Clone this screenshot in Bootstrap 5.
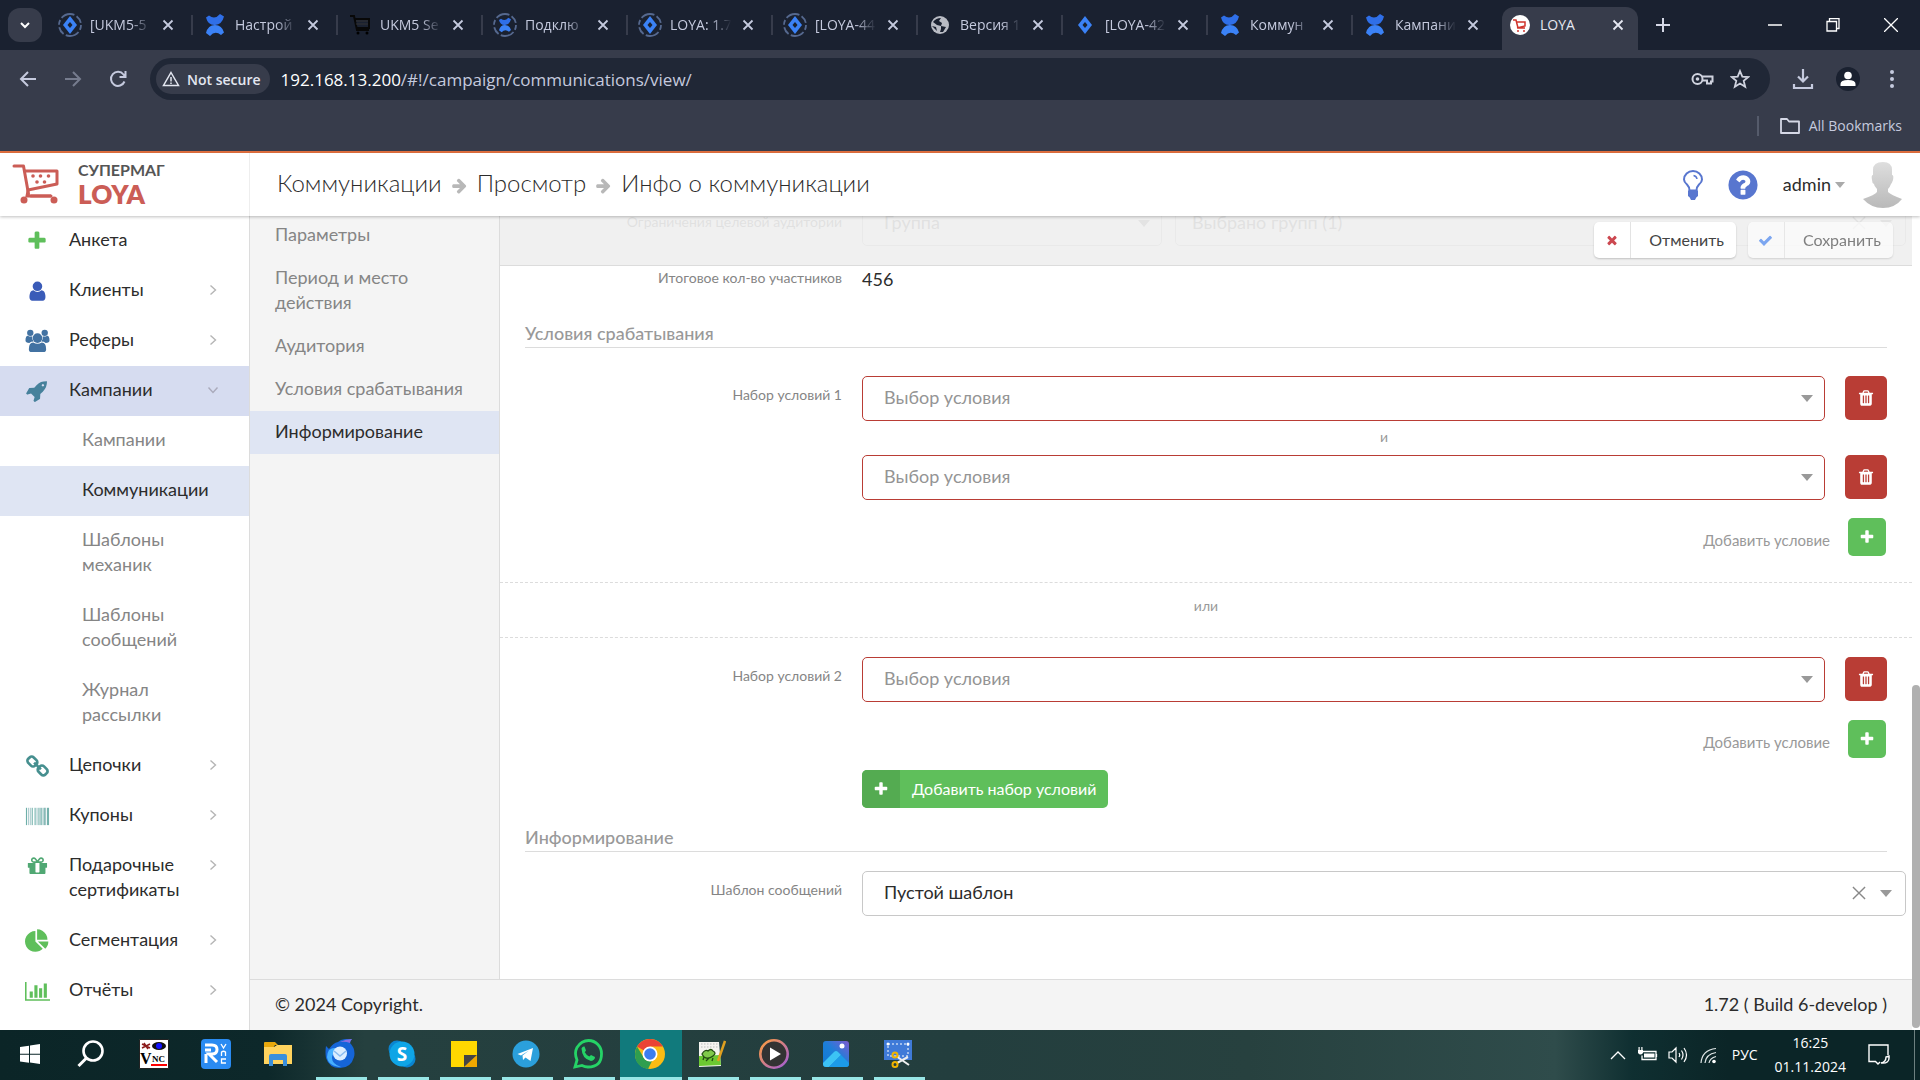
<!DOCTYPE html>
<html lang="ru">
<head>
<meta charset="utf-8">
<meta name="viewport" content="width=device-width, initial-scale=1">
<title>LOYA</title>
<link href="https://cdn.jsdelivr.net/npm/bootstrap@5.3.0/dist/css/bootstrap.min.css" rel="stylesheet">
<style>
:root{--ui:"Open Sans","Noto Sans",sans-serif;--app:Lato,"Open Sans",sans-serif;--ink:#2c2c2c;--dim:#858585;--rule:#dcdcdc}
body{height:100vh;font-family:var(--app);font-size:18px;line-height:25px;color:var(--ink);overflow:hidden;background:#fff}
svg{display:block;flex:none}
a{text-decoration:none;color:inherit}
.bare{border:0;background:none;padding:0;color:inherit;display:flex;align-items:center;justify-content:center}
/* browser */
.browser{font-family:var(--ui);background:#373c4b;color:#c5cade}
.tabstrip{background:#1a2130;height:50px;padding-left:8px}
.tabmenu{width:34px;height:34px;border-radius:12px;background:#373c4b;margin-right:6px;color:#fff}
.btab{width:145px;height:34px;padding-left:10px;position:relative;font-size:14px;line-height:20px}
.btab::after{content:"";position:absolute;right:0;top:7px;width:2px;height:20px;background:#373c4b}
.btab.last::after,.btab.on::after{display:none}
.btab .cap{width:68px;margin:0 4px 0 8px;white-space:nowrap;overflow:hidden;-webkit-mask:linear-gradient(90deg,#000 60%,transparent 90%);mask:linear-gradient(90deg,#000 60%,transparent 90%)}
.btab.on{align-self:flex-end;height:43px;width:136px;margin:0 0 0 4px;padding:0 0 7px 6px;background:#373c4b;border-radius:12px 12px 0 0;color:#e6e8f2}
.btab.on .cap{-webkit-mask:none;mask:none}
.winbtn{width:58px;height:40px;color:#fff}
.addr{height:58px;padding:0 18px 0 16px}
.navbtn{width:24px;margin-right:21px}
.omni{height:42px;border-radius:21px;background:#202736;margin-left:-1px;padding:0 20px 0 6px;min-width:0}
.chip{height:30px;border-radius:15px;background:#373c4b;padding:0 9px 0 6px;font-size:14px;font-weight:600;color:#e3e6f0;gap:7px}
.urltext{font-size:17px;padding-left:11px}
.hosty{color:#fff}
.tools{gap:22px;padding-left:22px}
.marks{height:43px;font-size:14px;padding:0 18px 8px 0}
.marks i{width:2px;height:20px;background:#555b6b;margin-right:20px}
.accent{height:2px;background:#e2703e}
/* header */
.apphead{height:63px;background:#fff;box-shadow:0 1px 3px rgba(0,0,0,.25);z-index:5}
.brand{width:250px;height:63px;padding:0 0 2px 12px;border-right:1px solid #eee}
.brand b{display:block}
.brand .l1{font-weight:700;font-size:16px;line-height:20px;color:#555}
.brand .l2{font-weight:800;font-size:26px;line-height:28px;color:#cb5d56}
.crumbs{font-weight:300;font-size:24px;line-height:30px;gap:9px;padding:0 0 4px 27px}
.crumbs svg{margin-top:6px}
/* side menu */
.side{width:250px;background:#fff;border-right:1px solid var(--rule)}
.side a{display:flex;padding:11px 0 14px 25px}
.side a svg.ic{width:25px;height:25px;margin-right:19px;margin-top:1px;margin-bottom:-1px}
.side a span{width:132px}
.side a .chev{margin:7px 0 0 6px}
.side .open{background:#d6dcf0}
.side .sub{padding-left:82px;color:var(--dim)}
.side .now,.steps .now{background:#dfe5f3;color:var(--ink)}
.steps{width:250px;background:#f4f4f4;border-right:1px solid var(--rule);color:var(--dim)}
.steps a{display:block;padding:8px 30px 10px 25px}
.steps a:first-child{padding-top:6px}
/* form */
.pane{background:#fff}
.formrow{display:flex;padding-right:25px}
.formrow.wide{padding-right:6px}
.lab{width:342px;margin-right:20px;padding-top:8px;text-align:right;font-size:14px;line-height:21px;color:var(--dim);flex:none}
.lab.cut{padding-top:10px}
.pick{height:45px;border:1px solid #c8c8c8;border-radius:5px;padding:0 40px 2px 21px;font-size:18px;line-height:25px;color:var(--ink);background-size:12px 7px;background-position:right 11px center;
--bs-form-select-bg-img:url("data:image/svg+xml,%3Csvg xmlns='http://www.w3.org/2000/svg' viewBox='0 0 12 7'%3E%3Cpath fill='%23999' d='M0 0h12L6 7z'/%3E%3C/svg%3E")}
.pick.bad{border-color:#b93d35;color:#949494}
.pick.last{background-position:right 13px center}
.delbtn{width:42px;height:44px;margin-left:20px;background:#b93d35;border-radius:5px;color:#fff;flex:none}
.addbtn{width:38px;height:38px;background:#5fbf5b;border-radius:5px;color:#fff;margin-left:18px}
.addrow{padding:18px 26px 0 0;font-size:15px;color:#999}
.addrow label{padding-top:10px}
.joiner{margin-left:362px;padding-right:6px;height:34px;line-height:32px;font-size:14px;color:#999;text-align:center}
.orbox{margin-top:26px;margin-bottom:19px;height:56px;border-top:1px dashed var(--rule);border-bottom:1px dashed var(--rule);padding-top:12px;font-size:14px;line-height:21px;color:#999;text-align:center}
.sect{margin:0 25px;padding-bottom:1px;border-bottom:1px solid var(--rule);font-size:18px;line-height:25px;color:#999}
.addset{margin:12px 0 17px 362px;height:38px;border-radius:5px;background:#5fbf5b;color:#fff;font-size:16px;overflow:hidden}
.addset span:first-child{width:38px;height:38px;background:#54ab51}
.addset span:last-child{padding:0 12px 2px}
.actbar{position:absolute;left:0;right:0;top:0;height:50px;background:rgba(238,238,238,.87);border-bottom:1px solid var(--rule);padding:6px 19px 0 0;gap:12px}
.act{height:36px;border-radius:5px;background:#fff;border:0;padding:0;font-size:16px;color:#444;box-shadow:0 1px 2px rgba(0,0,0,.2)}
.act span:first-child{width:37px;height:36px;border-right:1px solid #e3e3e3}
.act span:last-child{padding:0 12px 2px 18px}
.act:disabled{opacity:.65}
.clearx{position:absolute;right:37px;top:12px;width:20px;height:20px;color:#888}
.foot{height:51px;background:#f4f4f4;border-top:1px solid var(--rule);padding:0 25px 1px}
.track{width:8px;background:#fff;padding-top:469px}
.track div{height:343px;background:#b0b0b0;border-radius:4px}
/* taskbar */
.taskbar{height:50px;background:linear-gradient(90deg,#0b2527 0,#0d282a 14%,#25403f 19%,#233e3e 50%,#27413f 65%,#2f4c4b 81%,#0f2f31 85%,#0b2527 90%);font-family:var(--ui);color:#fff}
.tbtn{width:62px;height:50px;border-bottom:3px solid transparent;padding-right:2px;position:relative}
.tbtn.run::after{content:"";position:absolute;left:6px;right:5px;bottom:-3px;height:3px;background:#98e6e6}
.tbtn.act-now{background:#117a7c}
.tbtn.act-now::after{left:0;right:0}
.tray{font-size:14px;line-height:24px}
</style>
</head>
<body class="d-flex flex-column">
<svg width="0" height="0" style="position:absolute">
<symbol id="x" viewBox="0 0 12 12"><path d="M1.500 1.500l9 9m0-9l-9 9" stroke="currentColor" stroke-width="1.800" fill="none"/></symbol>
<symbol id="thinx" viewBox="0 0 12 12"><path d="M.8.800l10.400 10.400m0-10.400L.8 11.200" stroke="currentColor" stroke-width="1.200" fill="none"/></symbol>
<symbol id="jira" viewBox="0 0 24 24"><path d="M12 3l7 9-7 9-7-9z" fill="#3b82f6"/><path d="M12 9l2.500 3-2.500 3-2.500-3z" fill="#1a2130"/></symbol>
<symbol id="ring" viewBox="0 0 24 24"><circle cx="12" cy="12" r="11" fill="none" stroke="#56698f" stroke-width="1.800" stroke-dasharray="5 2.500 14 2.500 8 2.500"/></symbol>
<symbol id="conf" viewBox="0 0 24 24"><path d="M3 4.500l3-2q6 4.500 11-1.500l4 2.500q-2 8-9 8.500T3 4.500z" fill="#2f6fe8"/><path d="M21 19.500l-3 2.500q-6-5-11 1l-4-3q2-8 9-8t9 7.500z" fill="#3b82f6"/></symbol>
<symbol id="plus" viewBox="0 0 1792 1792"><path fill="currentColor" d="M1600 736v192q0 40-28 68t-68 28h-416v416q0 40-28 68t-68 28h-192q-40 0-68-28t-28-68v-416h-416q-40 0-68-28t-28-68v-192q0-40 28-68t68-28h416v-416q0-40 28-68t68-28h192q40 0 68 28t28 68v416h416q40 0 68 28t28 68z"/></symbol>
<symbol id="trash" viewBox="0 0 1792 1792"><path fill="currentColor" d="M704 1376v-704q0-14-9-23t-23-9h-64q-14 0-23 9t-9 23v704q0 14 9 23t23 9h64q14 0 23-9t9-23zm256 0v-704q0-14-9-23t-23-9h-64q-14 0-23 9t-9 23v704q0 14 9 23t23 9h64q14 0 23-9t9-23zm256 0v-704q0-14-9-23t-23-9h-64q-14 0-23 9t-9 23v704q0 14 9 23t23 9h64q14 0 23-9t9-23zm-544-992h448l-48-117q-7-9-17-11h-317q-10 2-17 11zm928 32v64q0 14-9 23t-23 9h-96v948q0 83-47 143.500t-113 60.500h-832q-66 0-113-58.500t-47-141.500v-952h-96q-14 0-23-9t-9-23v-64q0-14 9-23t23-9h309l70-167q15-37 54-63t79-26h320q40 0 79 26t54 63l70 167h309q14 0 23 9t9 23z"/></symbol>
<symbol id="arr" viewBox="0 0 1792 1792"><path fill="#b8b8b8" d="M1600 960q0 54-37 91l-651 651q-39 37-91 37-51 0-90-37l-75-75q-38-38-38-91t38-91l293-293h-704q-52 0-84.500-37.500t-32.500-90.500v-128q0-53 32.500-90.500t84.500-37.500h704l-293-294q-38-36-38-90t38-90l75-75q38-38 90-38 53 0 91 38l651 651q37 35 37 90z"/></symbol>
<symbol id="chev" viewBox="0 0 12 12"><path d="M3.500 1.500L8.500 6l-5 4.500" fill="none" stroke="#b5b5b5" stroke-width="1.400"/></symbol>
<symbol id="cart" viewBox="0 0 48 42"><g fill="none" stroke="#cb5d56" stroke-width="3" stroke-linejoin="round" stroke-linecap="round"><path d="M2 3h9.500l5 28"/><path d="M13 8h32v13L16 27"/><path d="M19 33h20"/></g><path d="M16 28l-1 5h24" fill="none" stroke="#cb5d56" stroke-width="3"/><g fill="#cb5d56"><circle cx="12" cy="37" r="3.500"/><circle cx="42" cy="37" r="3.500"/><circle cx="21" cy="13" r="1.800"/><circle cx="28.500" cy="13" r="1.800"/><circle cx="36.500" cy="13" r="1.800"/><circle cx="25" cy="19" r="1.800"/><circle cx="32.500" cy="19" r="1.800"/></g></symbol>
</svg>

<section class="browser">
  <div class="tabstrip d-flex align-items-center">
    <button class="bare tabmenu" aria-label="Tabs"><svg width="12" height="12" viewBox="0 0 12 12"><path d="M2 4l4 4 4-4" fill="none" stroke="#fff" stroke-width="2"/></svg></button>
    <div class="btab d-flex align-items-center"><svg width="24" height="24"><use href="#ring"/><use href="#jira"/></svg><span class="cap">[UKM5-5</span><button class="bare" aria-label="Close"><svg width="12" height="12"><use href="#x"/></svg></button></div>
    <div class="btab d-flex align-items-center"><svg width="24" height="24"><use href="#conf"/></svg><span class="cap">Настрой</span><button class="bare" aria-label="Close"><svg width="12" height="12"><use href="#x"/></svg></button></div>
    <div class="btab d-flex align-items-center"><svg width="24" height="24" viewBox="0 0 24 24"><path d="M2 3h4l3 14h12M6 6h15v9H9" fill="none" stroke="#080808" stroke-width="2"/><path d="M8 8h12M8 11h12" stroke="#333" stroke-width="1"/><circle cx="10" cy="20" r="1.500"/><circle cx="19" cy="20" r="1.500"/></svg><span class="cap">UKM5 Se</span><button class="bare" aria-label="Close"><svg width="12" height="12"><use href="#x"/></svg></button></div>
    <div class="btab d-flex align-items-center"><svg width="24" height="24"><use href="#ring"/><use href="#conf" x="4" y="4" width="16" height="16"/></svg><span class="cap">Подклю</span><button class="bare" aria-label="Close"><svg width="12" height="12"><use href="#x"/></svg></button></div>
    <div class="btab d-flex align-items-center"><svg width="24" height="24"><use href="#ring"/><use href="#jira"/></svg><span class="cap">LOYA: 1.7</span><button class="bare" aria-label="Close"><svg width="12" height="12"><use href="#x"/></svg></button></div>
    <div class="btab d-flex align-items-center"><svg width="24" height="24"><use href="#ring"/><use href="#jira"/></svg><span class="cap">[LOYA-44</span><button class="bare" aria-label="Close"><svg width="12" height="12"><use href="#x"/></svg></button></div>
    <div class="btab d-flex align-items-center"><svg width="24" height="24" viewBox="0 0 24 24"><circle cx="12" cy="12" r="9" fill="#b9bcc4"/><path d="M5 9q3-4 8-4l-2 3 3 2-1 3-4-1zM13 13l5 1-3 5-3 0 1-3zM4 13l4 1 1 4z" fill="#1a2130"/></svg><span class="cap">Версия 1</span><button class="bare" aria-label="Close"><svg width="12" height="12"><use href="#x"/></svg></button></div>
    <div class="btab d-flex align-items-center"><svg width="24" height="24"><use href="#jira"/></svg><span class="cap">[LOYA-42</span><button class="bare" aria-label="Close"><svg width="12" height="12"><use href="#x"/></svg></button></div>
    <div class="btab d-flex align-items-center"><svg width="24" height="24"><use href="#conf"/></svg><span class="cap">Коммун</span><button class="bare" aria-label="Close"><svg width="12" height="12"><use href="#x"/></svg></button></div>
    <div class="btab last d-flex align-items-center"><svg width="24" height="24"><use href="#conf"/></svg><span class="cap">Кампани</span><button class="bare" aria-label="Close"><svg width="12" height="12"><use href="#x"/></svg></button></div>
    <div class="btab on d-flex align-items-center"><svg width="24" height="24" viewBox="0 0 24 24"><circle cx="12" cy="12" r="10" fill="#fff"/><path d="M5 7h3l2 8h7M8 9h9v4l-8 2" fill="none" stroke="#d0342c" stroke-width="1.500"/><circle cx="10" cy="18" r="1" fill="#d0342c"/><circle cx="16" cy="18" r="1" fill="#d0342c"/></svg><span class="cap">LOYA</span><button class="bare" aria-label="Close"><svg width="12" height="12"><use href="#x"/></svg></button></div>
    <button class="bare ms-3" aria-label="New tab"><svg width="18" height="18" viewBox="0 0 18 18"><path d="M9 2v14M2 9h14" stroke="#d5d8e6" stroke-width="2"/></svg></button>
    <div class="ms-auto d-flex">
      <button class="bare winbtn" aria-label="Minimize"><svg width="14" height="14" viewBox="0 0 14 14"><path d="M0 7h14" stroke="#fff" stroke-width="1.500"/></svg></button>
      <button class="bare winbtn" aria-label="Restore"><svg width="14" height="14" viewBox="0 0 14 14"><path d="M1 3.500h9.500V13H1zM3.500 3.500v-3H13V10.500h-2.500" fill="none" stroke="#fff" stroke-width="1.300"/></svg></button>
      <button class="bare winbtn" aria-label="Close window"><svg width="14" height="14" viewBox="0 0 14 14"><path d="M0 0l14 14M14 0L0 14" stroke="#fff" stroke-width="1.300"/></svg></button>
    </div>
  </div>
  <div class="addr d-flex align-items-center">
    <button class="bare navbtn" aria-label="Back"><svg width="20" height="20" viewBox="0 0 20 20"><path d="M18 10H3M10 3l-7 7 7 7" fill="none" stroke="#c5cade" stroke-width="2"/></svg></button>
    <button class="bare navbtn" aria-label="Forward"><svg width="20" height="20" viewBox="0 0 20 20"><path d="M2 10h15M10 3l7 7-7 7" fill="none" stroke="#767c8e" stroke-width="2"/></svg></button>
    <button class="bare navbtn" aria-label="Reload"><svg width="20" height="20" viewBox="0 0 20 20"><path d="M16.500 12.500A7 7 0 1 1 15.500 5.500L17 7M17.500 2v6h-6" fill="none" stroke="#c5cade" stroke-width="2"/></svg></button>
    <div class="omni d-flex align-items-center flex-grow-1">
      <button class="bare chip"><svg width="18" height="18" viewBox="0 0 18 18"><path d="M9 2.500L16.500 15.500h-15zM9 7v4.500M9 12.500v1.500" fill="none" stroke="#e3e6f0" stroke-width="1.500"/></svg>Not secure</button>
      <a href="#" class="urltext flex-grow-1"><span class="hosty">192.168.13.200</span>/#!/campaign/communications/view/</a>
      <button class="bare me-3" aria-label="Passwords"><svg width="24" height="24" viewBox="0 0 24 24"><circle cx="7.500" cy="12" r="5" fill="none" stroke="#d0d3df" stroke-width="2"/><circle cx="7.500" cy="12" r="1.800" fill="#d0d3df"/><path d="M12 9.500h10.500v5h-1.500v2h-4v-3h-5" fill="none" stroke="#d0d3df" stroke-width="2"/></svg></button>
      <button class="bare" aria-label="Bookmark"><svg width="20" height="20" viewBox="0 0 20 20"><path d="M10 2l2.300 5.600 6 .4-4.600 3.900 1.500 5.900L10 14.600l-5.200 3.200 1.500-5.900L1.700 8l6-.4z" fill="none" stroke="#d0d3df" stroke-width="1.800"/></svg></button>
    </div>
    <div class="tools d-flex align-items-center">
      <button class="bare" aria-label="Downloads"><svg width="22" height="22" viewBox="0 0 22 22"><path d="M11 1v12M6 8.500l5 5 5-5M2 16v4h18v-4" fill="none" stroke="#c5cade" stroke-width="2.200"/></svg></button>
      <button class="bare" aria-label="Profile"><svg width="24" height="24" viewBox="0 0 24 24"><circle cx="12" cy="12" r="12" fill="#1a2130"/><circle cx="12" cy="8.500" r="3.800" fill="#fff"/><path d="M4.500 19v-2q0-4 7.500-4t7.500 4v2z" fill="#fff"/></svg></button>
      <button class="bare" aria-label="Menu"><svg width="20" height="20" viewBox="0 0 20 20" fill="#c5cade"><circle cx="10" cy="3" r="2"/><circle cx="10" cy="10" r="2"/><circle cx="10" cy="17" r="2"/></svg></button>
    </div>
  </div>
  <div class="marks d-flex align-items-center justify-content-end"><i></i><svg class="me-2" width="22" height="18" viewBox="0 0 22 18"><path d="M2 2h6l2 2.500h10V16H2z" fill="none" stroke="#d5d8e6" stroke-width="1.800" stroke-linejoin="round"/></svg><a href="#">All Bookmarks</a></div>
  <div class="accent"></div>
</section>

<header class="apphead d-flex align-items-center">
  <a href="#" class="brand d-flex align-items-center"><svg width="48" height="42"><use href="#cart"/></svg><span style="padding-left:18px"><b class="l1">СУПЕРМАГ</b><b class="l2">LOYA</b></span></a>
  <nav class="crumbs d-flex align-items-center flex-grow-1"><a href="#">Коммуникации</a><svg width="17" height="17"><use href="#arr"/></svg><a href="#">Просмотр</a><svg width="17" height="17"><use href="#arr"/></svg><a href="#">Инфо о коммуникации</a></nav>
  <div class="d-flex align-items-center" style="padding-right:16px">
    <button class="bare" aria-label="Подсказка" style="margin-right:22px"><svg width="22" height="30" viewBox="0 0 22 30"><path d="M7.500 20.500Q7.500 17 5 14.500Q2 12 2 9.500A9 8.500 0 0 1 20 9.500Q20 12 17 14.500Q14.500 17 14.500 20.500z" fill="none" stroke="#5876cf" stroke-width="2"/><path d="M11.500 5.500q3 .5 3.500 3.500" fill="none" stroke="#5876cf" stroke-width="1.500"/><path d="M6 20.500h10v5.500q-2 1-3 4H9Q8 27 6 26z" fill="#5876cf"/></svg></button>
    <a href="#" aria-label="Помощь" style="margin-right:23px"><svg width="34" height="34" viewBox="0 0 1792 1792"><path fill="#5876cf" d="M1024 1376v-192q0-14-9-23t-23-9h-192q-14 0-23 9t-9 23v192q0 14 9 23t23 9h192q14 0 23-9t9-23zm256-672q0-88-55.500-163t-138.500-116-170-41q-243 0-371 213-15 24 8 42l132 100q7 6 19 6 16 0 25-12 53-68 86-92 34-24 86-24 48 0 85.500 26t37.500 59q0 38-20 61t-68 45q-63 28-115.500 86.500t-52.500 125.500v36q0 14 9 23t23 9h192q14 0 23-9t9-23q0-19 21.500-49.500t54.500-49.500q32-18 49-28.500t46-35 44.500-48 28-60.500 12.500-81zm384 192q0 209-103 385.500t-279.500 279.500-385.500 103-385.500-103-279.500-279.500-103-385.500 103-385.500 279.500-279.500 385.500-103 385.500 103 279.500 279.500 103 385.500z"/></svg></a>
    <button class="bare">admin<svg class="ms-1" width="10" height="6" viewBox="0 0 10 6"><path d="M0 0h10L5 6z" fill="#aaa"/></svg></button>
    <svg width="42" height="48" viewBox="0 0 42 48" style="margin-left:17px"><defs><linearGradient id="av" x1="0" y1="0" x2="0" y2="1"><stop stop-color="#dedede"/><stop offset="1" stop-color="#b9b9b9"/></linearGradient></defs><path d="M21 1q9 0 9 8v5q2 0 1 5-1 3-2 4-1 3-3 5v3q3 3 14 7-7 9-19 9T1 38q12-4 14-7v-3q-3-3-3-5-2-1-2-4-1-5 1-5V9q0-8 10-8z" fill="url(#av)"/></svg>
  </div>
</header>

<main class="d-flex flex-grow-1" style="min-height:0">
  <nav class="side flex-shrink-0 overflow-hidden">
    <a href="#"><svg class="ic" style="color:#5fbf5b"><use href="#plus" x="1" y="2" width="22" height="22"/></svg><span>Анкета</span></a>
    <a href="#"><svg class="ic" viewBox="-100 -150 2000 2000"><path fill="#3a5bb8" d="M1536 1399q0 109-62.500 187t-150.500 78h-854q-88 0-150.500-78t-62.500-187q0-85 8.500-160.500t31.500-152 58.500-131 94-89 134.500-34.500q131 128 313 128t313-128q76 0 134.500 34.500t94 89 58.500 131 31.500 152 8.500 160.500zm-256-887q0 159-112.500 271.500t-271.500 112.500-271.500-112.500-112.500-271.500 112.500-271.500 271.500-112.500 271.500 112.500 112.500 271.500z"/></svg><span>Клиенты</span><svg class="chev" width="12" height="12"><use href="#chev"/></svg></a>
    <a href="#"><svg class="ic" viewBox="0 0 26 26" fill="#4272a2"><circle cx="13" cy="10.500" r="5"/><path d="M4 22q0-7 4.500-7 4.500 3 9 0Q22 15 22 22q0 3-3 3H7q-3 0-3-3z"/><circle cx="5.500" cy="5" r="3.300"/><circle cx="20.500" cy="5" r="3.300"/><path d="M.5 13q0-5 2.500-5 2.500 1.500 4.500.5-.5 3.500 1.500 5.500-3 0-4.500 1.500Q.5 15.500.5 13zM25.500 13q0-5-2.500-5-2.500 1.500-4.500.5.500 3.500-1.500 5.500 3 0 4.500 1.500 4 0 4-2.500z"/></svg><span>Реферы</span><svg class="chev" width="12" height="12"><use href="#chev"/></svg></a>
    <a href="#" class="open"><svg class="ic" viewBox="-60 -120 1960 1960"><path fill="#46819b" d="M1440 448q0-40-28-68t-68-28-68 28-28 68 28 68 68 28 68-28 28-68zm224-288q0 249-75.500 430.500t-253.500 360.500q-81 80-195 176l-20 379q-2 16-16 26l-384 224q-7 4-16 4-12 0-23-9l-64-64q-13-14-8-32l85-276-281-281-276 85q-3 1-9 1-14 0-23-9l-64-64q-17-19-5-39l224-384q10-14 26-16l379-20q96-114 176-195 188-187 358-258t431-71q14 0 24 9.500t10 22.500z"/></svg><span>Кампании</span><svg class="chev" width="12" height="12" viewBox="0 0 12 12"><path d="M1.500 3.500L6 8.500l4.500-5" fill="none" stroke="#aab" stroke-width="1.400"/></svg></a>
    <a href="#" class="sub">Кампании</a>
    <a href="#" class="sub now">Коммуникации</a>
    <a href="#" class="sub">Шаблоны<br>механик</a>
    <a href="#" class="sub">Шаблоны<br>сообщений</a>
    <a href="#" class="sub">Журнал<br>рассылки</a>
    <a href="#"><svg class="ic" viewBox="0 0 26 26"><g fill="none" stroke="#468f8f" stroke-width="2.800"><rect x="-5" y="-3.500" width="10" height="8" rx="3" transform="translate(8 8.500) rotate(45)"/><rect x="-5" y="-4.500" width="10" height="8" rx="3" transform="translate(18 18.500) rotate(45)"/><path d="M9.500 10l7 7"/></g></svg><span>Цепочки</span><svg class="chev" width="12" height="12"><use href="#chev"/></svg></a>
    <a href="#"><svg class="ic" viewBox="0 0 26 26"><path d="M1.500 5v18M7.500 5v18M10.500 5v18M14.500 5v18M17.500 5v18M23.500 5v18" stroke="#5fa7a0" stroke-width="1"/><path d="M3.500 5v18M5.500 5v18M12.500 5v18M16 5v18M19.500 5v18M21.500 5v18" stroke="#9fc4c6"/><path d="M24.500 5v18M20.500 5v18" stroke="#6aa9a4"/></svg><span>Купоны</span><svg class="chev" width="12" height="12"><use href="#chev"/></svg></a>
    <a href="#"><svg class="ic" viewBox="-100 -150 2000 2000"><path fill="#50a873" d="M1056 1356v-716h-320v716q0 25 18 38.500t46 13.500h192q28 0 46-13.500t18-38.500zm-456-844h195l-126-161q-26-31-69-31-40 0-68 28t-28 68 28 68 68 28zm688-96q0-40-28-68t-68-28q-43 0-69 31l-125 161h194q40 0 68-28t28-68zm376 256v320q0 14-9 23t-23 9h-96v416q0 40-28 68t-68 28h-1088q-40 0-68-28t-28-68v-416h-96q-14 0-23-9t-9-23v-320q0-14 9-23t23-9h440q-93 0-158.500-65.500t-65.500-158.500 65.500-158.500 158.500-65.500q107 0 168 77l128 165 128-165q61-77 168-77 93 0 158.500 65.500t65.500 158.500-65.500 158.500-158.500 65.500h440q14 0 23 9t9 23z"/></svg><span>Подарочные<br>сертификаты</span><svg class="chev" width="12" height="12"><use href="#chev"/></svg></a>
    <a href="#"><svg class="ic" viewBox="0 -100 1850 1850"><path fill="#5fbf5b" d="M768 890l546 546q-106 108-247.500 168t-298.500 60q-209 0-385.500-103t-279.500-279.500-103-385.500 103-385.500 279.500-279.500 385.500-103v762zm187 6h773q0 157-60 298.500t-168 247.500zm709-128h-768v-768q209 0 385.500 103t279.500 279.500 103 385.500z"/></svg><span>Сегментация</span><svg class="chev" width="12" height="12"><use href="#chev"/></svg></a>
    <a href="#"><svg class="ic" viewBox="0 -200 2048 2048"><path fill="#5fbf5b" d="M640 896v512h-256v-512h256zm384-512v1024h-256v-1024h256zm1024 1152v128h-2048v-1536h128v1408h1920zm-640-896v768h-256v-768h256zm384-384v1152h-256v-1152h256z"/></svg><span>Отчёты</span><svg class="chev" width="12" height="12"><use href="#chev"/></svg></a>
  </nav>
  <div class="d-flex flex-column flex-grow-1">
    <div class="d-flex flex-grow-1" style="min-height:0">
      <nav class="steps flex-shrink-0"><a href="#">Параметры</a><a href="#">Период и место<br>действия</a><a href="#">Аудитория</a><a href="#">Условия срабатывания</a><a href="#" class="now">Информирование</a></nav>
      <form class="pane flex-grow-1 position-relative overflow-hidden">
        <div class="formrow wide" style="margin-top:-15px">
          <label class="lab cut" for="lim">Ограничения целевой аудитории</label>
          <select id="lim" class="form-select pick flex-shrink-0" style="width:300px;color:#888"><option>Группа</option></select>
          <div class="position-relative flex-grow-1" style="margin-left:13px"><select class="form-select pick last" aria-label="Группы" style="color:#888;padding-left:16px"><option>Выбрано групп (1)</option></select><button type="button" class="bare clearx" aria-label="Очистить"><svg width="14" height="14"><use href="#thinx"/></svg></button></div>
        </div>
        <div class="formrow" style="margin-top:21px"><span class="lab" style="padding-top:0">Итоговое кол-во участников</span><span>456</span></div>
        <h2 class="sect" style="margin-top:29px;margin-bottom:28px">Условия срабатывания</h2>
        <div class="formrow"><label class="lab" for="c1">Набор условий 1</label><select id="c1" class="form-select pick bad"><option>Выбор условия</option></select><button type="button" class="bare delbtn" aria-label="Удалить"><svg width="18" height="18"><use href="#trash"/></svg></button></div>
        <div class="joiner">и</div>
        <div class="formrow"><span class="lab"></span><select aria-label="Условие" class="form-select pick bad"><option>Выбор условия</option></select><button type="button" class="bare delbtn" aria-label="Удалить"><svg width="18" height="18"><use href="#trash"/></svg></button></div>
        <div class="addrow d-flex justify-content-end"><label for="a1">Добавить условие</label><button type="button" id="a1" class="bare addbtn"><svg width="16" height="16"><use href="#plus"/></svg></button></div>
        <div class="orbox">или</div>
        <div class="formrow"><label class="lab" for="c3">Набор условий 2</label><select id="c3" class="form-select pick bad"><option>Выбор условия</option></select><button type="button" class="bare delbtn" aria-label="Удалить"><svg width="18" height="18"><use href="#trash"/></svg></button></div>
        <div class="addrow d-flex justify-content-end"><label for="a2">Добавить условие</label><button type="button" id="a2" class="bare addbtn"><svg width="16" height="16"><use href="#plus"/></svg></button></div>
        <button type="button" class="bare addset"><span class="d-flex align-items-center justify-content-center"><svg width="16" height="16"><use href="#plus"/></svg></span><span>Добавить набор условий</span></button>
        <h2 class="sect" style="margin-bottom:19px">Информирование</h2>
        <div class="formrow wide"><label class="lab" for="tpl">Шаблон сообщений</label><div class="position-relative flex-grow-1"><select id="tpl" class="form-select pick last"><option>Пустой шаблон</option></select><button type="button" class="bare clearx" aria-label="Очистить"><svg width="14" height="14"><use href="#thinx"/></svg></button></div></div>
        <div class="actbar d-flex justify-content-end">
          <button type="button" class="act d-flex align-items-center"><span class="d-flex align-items-center justify-content-center"><svg width="14" height="14" viewBox="0 0 1792 1792"><path fill="#cc4850" d="M1490 1322q0 40-28 68l-136 136q-28 28-68 28t-68-28l-294-294-294 294q-28 28-68 28t-68-28l-136-136q-28-28-28-68t28-68l294-294-294-294q-28-28-28-68t28-68l136-136q28-28 68-28t68 28l294 294 294-294q28-28 68-28t68 28l136 136q28 28 28 68t-28 68l-294 294 294 294q28 28 28 68z"/></svg></span><span>Отменить</span></button>
          <button type="button" class="act d-flex align-items-center" disabled><span class="d-flex align-items-center justify-content-center"><svg width="15" height="15" viewBox="0 0 1792 1792"><path fill="#3f7ff0" d="M1671 566q0 40-28 68l-724 724-136 136q-28 28-68 28t-68-28l-136-136-362-362q-28-28-28-68t28-68l136-136q28-28 68-28t68 28l294 295 656-657q28-28 68-28t68 28l136 136q28 28 28 68z"/></svg></span><span>Сохранить</span></button>
        </div>
      </form>
    </div>
    <footer class="foot d-flex align-items-center justify-content-between"><span>© 2024 Copyright.</span><span>1.72 ( Build 6-develop )</span></footer>
  </div>
  <div class="track flex-shrink-0"><div></div></div>
</main>

<footer class="taskbar d-flex align-items-center flex-shrink-0">
  <button class="bare tbtn" aria-label="Пуск"><svg width="20" height="20" viewBox="0 0 20 20"><path fill="#fff" d="M0 3l9-1.300v8H0zM10 1.500L20 0v9.700H10zM0 10.700h9v8L0 17.500zM10 10.700h10V20l-10-1.500z"/></svg></button>
  <button class="bare tbtn" aria-label="Поиск"><svg width="30" height="30" viewBox="2 0 30 30"><circle cx="18" cy="12" r="9.500" fill="none" stroke="#fff" stroke-width="2.600"/><path d="M11.500 19l-8 8" stroke="#fff" stroke-width="3"/></svg></button>
  <button class="bare tbtn" aria-label="VNC"><svg width="30" height="30" viewBox="0 0 30 30"><path fill="#fff" stroke="#222" d="M.5.500h29v29H.5z"/><ellipse cx="20" cy="7" rx="7" ry="4" fill="#111"/><circle cx="20" cy="7" r="3" fill="#11f"/><path d="M3 5l8 4M3 9l8-4M5 4l4 6" stroke="#8b1a1a" stroke-width="1.500"/><text x="1" y="25" font-family="Liberation Serif" font-weight="700" font-size="16">V</text><text x="13" y="23" font-family="Liberation Serif" font-weight="700" font-size="9">NC</text><path fill="#f00" d="M12 25h16v2H12z"/></svg></button>
  <button class="bare tbtn" aria-label="RealVNC"><svg width="30" height="30" viewBox="0 0 30 30"><rect width="30" height="30" rx="4" fill="#2a8bf2"/><path d="M4 6h7q5 0 5 4.500T11 15H8l8 8M4 11h6M5 15v9" fill="none" stroke="#fff" stroke-width="3"/><path d="M20 5l2.500 4L25 5M20.500 17v-4q2-1.500 4 0v4M25 20h-4.500v4H25" fill="none" stroke="#fff" stroke-width="1.300"/></svg></button>
  <button class="bare tbtn" aria-label="Проводник"><svg width="28" height="24" viewBox="0 0 28 24"><path fill="#e8a80c" d="M0 1q0-1 1-1h10l3 3h-3L9 6H0z"/><path fill="#ffd35e" d="M0 5h10l3-2h15v19H0z"/><path fill="#3a8fdc" d="M5 24V14q0-2 2-2h14q2 0 2 2v10h-4v-6H9v6z"/></svg></button>
  <button class="bare tbtn run" aria-label="Thunderbird"><svg width="30" height="30" viewBox="0 0 30 30"><path fill="#1565d8" d="M1 7l3 3Q8 4 13 3q4-4 14-3-2 2-2 4 6 6 4 14-3 11-14 11T1 19Q0 13 1 7z"/><path fill="#46b0ff" d="M4 11q6-4 9 0-6 3-6 8 0 6 9 9Q3 27 2 18q0-4 2-7z"/><path fill="#8b6fe0" d="M15 3q6-3 12-3-2 2-2 4-5-2-10-1z"/><circle cx="15" cy="14.500" r="7" fill="#dceeff"/><path d="M9 12l6 5 6-5" fill="none" stroke="#8bbcf0" stroke-width="1.500"/></svg></button>
  <button class="bare tbtn run" aria-label="Skype"><svg width="28" height="28" viewBox="0 0 28 28"><circle cx="9" cy="9" r="8.500" fill="#0a84d0"/><circle cx="19" cy="19" r="8.500" fill="#0a84d0"/><circle cx="14" cy="14" r="12.500" fill="#0fa5e6"/><text x="14" y="21" text-anchor="middle" font-family="Open Sans" font-weight="700" font-size="19" fill="#fff">S</text></svg></button>
  <button class="bare tbtn run" aria-label="Заметки"><svg width="26" height="26" viewBox="0 0 26 26"><path fill="#ffd800" d="M0 0h26v26H0z"/><path fill="#f0a800" d="M13 26l13-12v12z"/><path fill="#444" d="M13 14h13L13 26z"/></svg></button>
  <button class="bare tbtn run" aria-label="Telegram"><svg width="28" height="28" viewBox="0 0 28 28"><circle cx="14" cy="14" r="13.500" fill="#2ba0dc"/><path fill="#fff" d="M5.500 14L21 8l-2.500 13-5-3.500-2.500 2.500-.5-4.500L17 10.500 9 15.500z"/></svg></button>
  <button class="bare tbtn run" aria-label="WhatsApp"><svg width="30" height="30" viewBox="0 0 30 30"><path d="M2 28l2-7Q1 14 4 8.500 8.500 1.500 15.500 1.500A13 13 0 0 1 28.500 15q0 13-13.500 13-3 0-6-1.500z" fill="none" stroke="#25d366" stroke-width="2.800"/><path fill="#25d366" d="M8.500 9.500q1-2.500 3-2l1.500 4-1.200 1.800q1.500 3 4.500 4.200l1.700-1.500 4 2q0 3-4 4Q9 20 8.500 9.500z"/></svg></button>
  <button class="bare tbtn run act-now" aria-label="Chrome"><svg width="30" height="30" viewBox="0 0 30 30"><circle cx="15" cy="15" r="15" fill="#fbbc14"/><path fill="#ea4335" d="M15 15L2 7.500Q6.500 0 15 0t13 7.500H15z"/><path fill="#2f9e4f" d="M2 7.500L9 19q3 4 8 3l-4 8Q0 27.500 0 15q0-4 2-7.500z"/><circle cx="15" cy="15" r="7.500" fill="#fff"/><circle cx="15" cy="15" r="5.800" fill="#3b7df0"/></svg></button>
  <button class="bare tbtn run" aria-label="Notepad++"><svg width="28" height="28" viewBox="0 0 28 28"><path fill="#f4f4f0" d="M1 2l20 0 2 24-22 1z"/><path fill="#6cc832" d="M1 16l21-1 1 10-22 1z"/><path d="M3 4h17M3 7h17" stroke="#bbb" stroke-dasharray="1.500 1.500"/><path d="M4 14q3-5 6-3 3-3 5 0 4 2 0 5-5 4-9 1zM8 21l3-3M14 21l1-3M6 17l-1 3" fill="#7fc94a" stroke="#234d12" stroke-width="1.300"/><path d="M27 1l-7 20" stroke="#e0a020" stroke-width="2.500"/></svg></button>
  <button class="bare tbtn run" aria-label="Медиаплеер"><svg width="30" height="30" viewBox="0 0 30 30"><defs><linearGradient id="mp" x1="0" y1="0" x2="1" y2="1"><stop stop-color="#ff9d3c"/><stop offset="1" stop-color="#a05cd8"/></linearGradient></defs><circle cx="15" cy="15" r="13.700" fill="#333" stroke="url(#mp)" stroke-width="2.600"/><path fill="#fff" d="M11 8.500v13L22 15z"/></svg></button>
  <button class="bare tbtn run" aria-label="Фотографии"><svg width="26" height="26" viewBox="0 0 26 26"><defs><linearGradient id="ph" x1="0" y1="1" x2="1" y2="0"><stop stop-color="#1178d4"/><stop offset=".5" stop-color="#1c7fd8"/><stop offset="1" stop-color="#7e5bd0"/></linearGradient></defs><rect width="26" height="26" rx="3" fill="url(#ph)"/><path fill="#3cc3f5" d="M0 22L11 11q2-2 4 0l3 3L6 26H3q-3 0-3-3z"/><path fill="#1c9be8" d="M18 14l8 8v1q0 3-3 3H6z"/><circle cx="19" cy="5" r="2.500" fill="#fff"/></svg></button>
  <button class="bare tbtn run" aria-label="Ножницы"><svg width="28" height="28" viewBox="0 0 28 28"><path fill="#3f7ad8" d="M0 0h28v20H0z"/><path d="M4 4h20v12H4z" fill="none" stroke="#fff" stroke-dasharray="2 2"/><circle cx="4" cy="4" r="1.500" fill="#fff"/><circle cx="24" cy="4" r="1.500" fill="#fff"/><path d="M12 16l13 9M13 23l11-6" stroke="#eee" stroke-width="2"/><circle cx="11" cy="15" r="2.500" fill="none" stroke="#f0b400" stroke-width="2"/><circle cx="11" cy="24.500" r="2.500" fill="none" stroke="#f0b400" stroke-width="2"/></svg></button>
  <div class="tray ms-auto d-flex align-items-center">
    <svg width="16" height="10" viewBox="0 0 16 10"><path d="M1 9l7-7 7 7" fill="none" stroke="#fff" stroke-width="1.300"/></svg>
    <svg style="margin-left:12px" width="20" height="16" viewBox="0 0 20 16"><path d="M4 4.500h14v8H4v-4M18.500 7v3" fill="none" stroke="#fff" stroke-width="1.300"/><path fill="#fff" d="M6 6.500h10.500v4H6zM0 3h5v3q-2.500 3-5 0zM.5 0h1.200v3H.5zM3.300 0h1.200v3H3.300z"/></svg>
    <svg style="margin-left:10px" width="20" height="18" viewBox="0 0 20 18"><path d="M1 6h3l4-4v14l-4-4H1zM11 7q1.500 2 0 4M13.500 4.500q3 4.500 0 9M16 2q5 7 0 14" fill="none" stroke="#fff" stroke-width="1.200"/></svg>
    <svg style="margin-left:12px" width="17" height="17" viewBox="0 0 17 17"><path d="M1 16Q2 3 16 1.500M5 16Q6 7 16 5.500M9 16q1-5 7-6.500" fill="none" stroke="#dfe6e6" stroke-width="1.200"/><circle cx="14" cy="14.500" r="1.800" fill="#fff"/></svg>
    <span style="margin-left:15px">РУС</span>
    <div class="text-center" style="margin-left:17px">16:25<br>01.11.2024</div>
    <svg style="margin:0 14px 0 22px" width="22" height="22" viewBox="0 0 22 22"><path d="M12 18l-2 2-2.500-2.500H1V1h19v10M21 12q1 8-8 7 5-1 5-6z" fill="none" stroke="#fff" stroke-width="1.400"/></svg>
    <span style="width:6px;height:50px;margin-left:10px;border-left:1px solid #6d8080"></span>
  </div>
</footer>
<script src="https://cdn.jsdelivr.net/npm/bootstrap@5.3.0/dist/js/bootstrap.bundle.min.js"></script>
</body>
</html>
